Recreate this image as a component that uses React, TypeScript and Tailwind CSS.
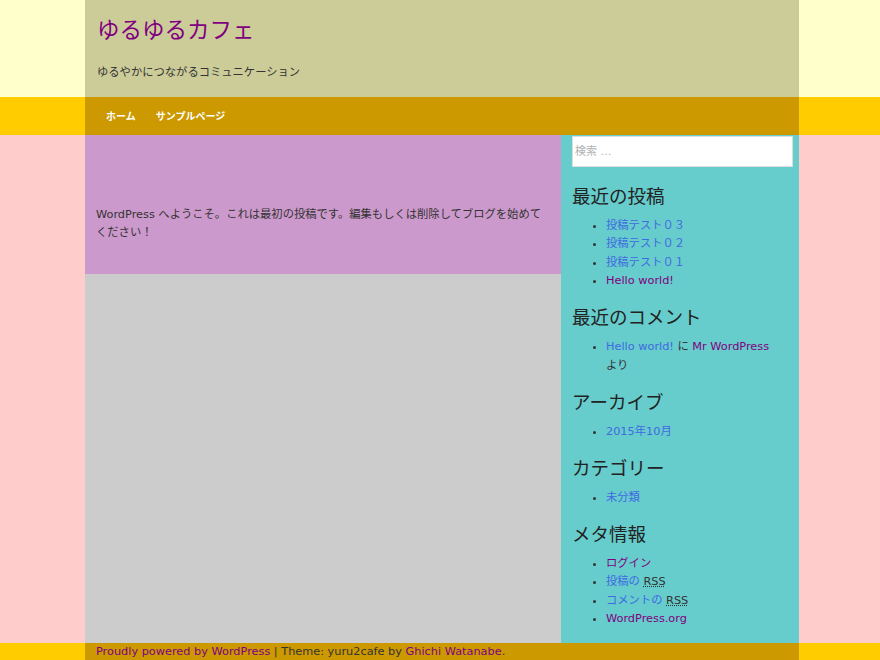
const FONT = "font-['DejaVu_Sans','Noto_Sans_CJK_JP',sans-serif]"

function Widget({ title, children }: { title: string; children: React.ReactNode }) {
  return (
    <section>
      <h2 className="text-[18.5px] leading-[26px] text-[#222]">{title}</h2>
      <ul className="mt-[7px] list-disc pl-[34px] text-[11.3px] leading-[18.5px] text-[#333] marker:text-[#333]">{children}</ul>
    </section>
  )
}

const blue = 'text-[#4169e1]'
const purple = 'text-[#800080]'

export default function App() {
  return (
    <div className={`${FONT} min-h-[660px] flex flex-col bg-[#ffcccc]`}>
      {/* header */}
      <div className="bg-[#ffffcc]">
        <header className="ml-[85px] h-[97px] w-[714px] bg-[#cccc99] px-[12px] pt-[15px]">
          <h1 className={`text-[22.5px] leading-[30px] ${purple}`}>ゆるゆるカフェ</h1>
          <p className="mt-[20px] text-[11.3px] leading-[16px] text-[#333]">ゆるやかにつながるコミュニケーション</p>
        </header>
      </div>

      {/* nav */}
      <div className="bg-[#ffcc00]">
        <nav className="ml-[85px] flex h-[38px] w-[714px] items-center gap-[20px] bg-[#cc9900] pl-[21px] text-[10px] font-bold text-white">
          <span>ホーム</span>
          <span>サンプルページ</span>
        </nav>
      </div>

      {/* body */}
      <div className="ml-[85px] flex w-[714px] flex-1">
        <main className="w-[476px] shrink-0 bg-[#cccccc]">
          <article className="bg-[#cc99cc] px-[11px] pt-[71px] pb-[32px] text-[11.3px] leading-[18px] text-[#333]">
            <p>WordPress へようこそ。これは最初の投稿です。編集もしくは削除してブログを始めてください！</p>
          </article>
        </main>
        <aside className="flex w-[238px] shrink-0 flex-col gap-[14.5px] bg-[#66cccc] pl-[11px] pr-[6px]">
          <input
            placeholder="検索 …"
            className="mt-px mb-[2px] h-[31px] w-full border border-[#ddd] bg-white px-[2px] text-[11px] outline-none placeholder:text-[#b0b0b0]"
          />
          <Widget title="最近の投稿">
            <li className={blue}>投稿テスト０３</li>
            <li className={blue}>投稿テスト０２</li>
            <li className={blue}>投稿テスト０１</li>
            <li className={purple}>Hello world!</li>
          </Widget>
          <Widget title="最近のコメント">
            <li>
              <span className={blue}>Hello world!</span> に <span className={purple}>Mr WordPress</span>{' '}
              <span className="whitespace-nowrap">より</span>
            </li>
          </Widget>
          <Widget title="アーカイブ">
            <li className={blue}>2015年10月</li>
          </Widget>
          <Widget title="カテゴリー">
            <li className={blue}>未分類</li>
          </Widget>
          <Widget title="メタ情報">
            <li className={purple}>ログイン</li>
            <li>
              <span className={blue}>投稿の </span>
              <abbr className="underline decoration-dotted">RSS</abbr>
            </li>
            <li>
              <span className={blue}>コメントの </span>
              <abbr className="underline decoration-dotted">RSS</abbr>
            </li>
            <li className={purple}>WordPress.org</li>
          </Widget>
        </aside>
      </div>

      {/* footer */}
      <div className="bg-[#ffcc00]">
        <footer className="ml-[85px] h-[17px] w-[714px] bg-[#cc9900] px-[11px] text-[11.3px] leading-[17px] text-[#333]">
          <span className={purple}>Proudly powered by WordPress</span> | Theme: yuru2cafe by{' '}
          <span className={purple}>Ghichi Watanabe</span>.
        </footer>
      </div>
    </div>
  )
}
